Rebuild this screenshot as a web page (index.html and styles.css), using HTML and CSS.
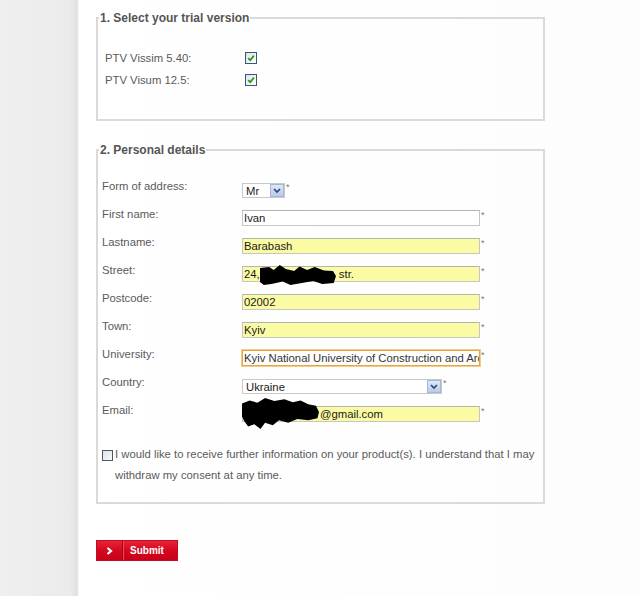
FILE: index.html
```html
<!DOCTYPE html>
<html lang="en">
<head>
<meta charset="utf-8">
<title>Trial version request</title>
<link rel="stylesheet" href="styles.css">
</head>
<body>
<div class="page">
  <aside class="sidebar"></aside>
  <main class="main">
    <form class="form">
      <fieldset class="box box-trial">
        <legend class="box-title">1. Select your trial version</legend>
        <div class="trial-row">
          <span class="trial-label">PTV Vissim 5.40:</span>
          <span class="check"><svg viewBox="0 0 10 10" width="10" height="10"><path d="M2.2 5.2 L4.2 7.2 L7.9 2.6" fill="none" stroke="#1e9a22" stroke-width="1.7"/></svg></span>
        </div>
        <div class="trial-row">
          <span class="trial-label">PTV Visum 12.5:</span>
          <span class="check"><svg viewBox="0 0 10 10" width="10" height="10"><path d="M2.2 5.2 L4.2 7.2 L7.9 2.6" fill="none" stroke="#1e9a22" stroke-width="1.7"/></svg></span>
        </div>
      </fieldset>

      <fieldset class="box box-personal">
        <legend class="box-title">2. Personal details</legend>
        <div class="row">
          <span class="label">Form of address:</span>
          <span class="select select-small">Mr<span class="select-btn"><svg viewBox="0 0 8 6" width="8" height="6"><path d="M1 1 L4 4 L7 1" fill="none" stroke="#2b4577" stroke-width="1.7"/></svg></span></span>
          <span class="req">*</span>
        </div>
        <div class="row">
          <span class="label">First name:</span>
          <span class="input">Ivan</span>
          <span class="req">*</span>
        </div>
        <div class="row">
          <span class="label">Lastname:</span>
          <span class="input filled">Barabash</span>
          <span class="req">*</span>
        </div>
        <div class="row">
          <span class="label">Street:</span>
          <span class="input filled">24,<span class="gap-street"></span> str.<span class="blob blob-street"></span></span>
          <span class="req">*</span>
        </div>
        <div class="row">
          <span class="label">Postcode:</span>
          <span class="input filled">02002</span>
          <span class="req">*</span>
        </div>
        <div class="row">
          <span class="label">Town:</span>
          <span class="input filled">Kyiv</span>
          <span class="req">*</span>
        </div>
        <div class="row">
          <span class="label">University:</span>
          <input class="input focused" type="text" readonly value="Kyiv National University of Construction and Architecture">
          <span class="req">*</span>
        </div>
        <div class="row">
          <span class="label">Country:</span>
          <span class="select select-wide">Ukraine<span class="select-btn"><svg viewBox="0 0 8 6" width="8" height="6"><path d="M1 1 L4 4 L7 1" fill="none" stroke="#2b4577" stroke-width="1.7"/></svg></span></span>
          <span class="req">*</span>
        </div>
        <div class="row">
          <span class="label">Email:</span>
          <span class="input filled"><span class="gap-email"></span>@gmail.com<span class="blob blob-email"></span></span>
          <span class="req">*</span>
        </div>
        <div class="consent">
          <span class="check check-empty"></span>
          <span class="consent-text">I would like to receive further information on your product(s). I understand that I may withdraw my consent at any time.</span>
        </div>
      </fieldset>

      <button type="button" class="submit"><span class="submit-arrow"><svg viewBox="0 0 8 8" width="8" height="8"><path d="M1.5 1 L5 4 L1.5 7" fill="none" stroke="#fff" stroke-width="2.2"/></svg></span><span class="submit-label">Submit</span></button>
    </form>
  </main>
</div>
</body>
</html>
```

FILE: styles.css
```css
* { box-sizing: border-box; }

html, body {
  margin: 0;
  padding: 0;
  background: #ffffff;
}

body {
  font-family: "Liberation Sans", Arial, sans-serif;
  font-size: 11.3px;
  color: #5a5a5a;
}

.page {
  display: flex;
  min-height: 596px;
}

.sidebar {
  width: 80px;
  flex: none;
  background: linear-gradient(to right, #efefef 0, #ebebeb 70px, #e4e4e4 75px, #dedede 77px, #f3f3f3 78px, #ffffff 80px);
}

.main {
  flex: 1;
  padding: 11px 0 0 16px;
  background: linear-gradient(to right, #ffffff 0, #fdfdfd 100%);
}

.form {
  margin: 0;
}

.box {
  width: 449px;
  margin: 0;
  border: 2px solid #dadada;
  padding: 0 0 0 4px;
}

.box-title {
  margin-left: -3px;
  padding: 0 1px;
  font-weight: bold;
  font-size: 12px;
  line-height: 14px;
  color: #555555;
}

.box-trial {
  padding-top: 22px;
  padding-bottom: 28px;
}

.trial-row {
  display: flex;
  align-items: center;
  height: 22px;
  padding-left: 3px;
}

.trial-label {
  width: 140px;
  flex: none;
}

.check {
  width: 12px;
  height: 12px;
  flex: none;
  display: flex;
  align-items: center;
  justify-content: center;
  border: 1px solid #3d5670;
  background: linear-gradient(to bottom right, #dce3ea, #ffffff);
}

.box-personal {
  margin-top: 22px;
  padding-top: 21px;
  padding-bottom: 16px;
}

.row {
  display: flex;
  align-items: flex-start;
  height: 28px;
}

.label {
  width: 140px;
  flex: none;
  line-height: 16px;
}

.input {
  position: relative;
  display: block;
  width: 238px;
  height: 16px;
  margin: 4px 0 0 0;
  padding: 0 0 0 1px;
  border: 1px solid #c6c6c6;
  border-top-color: #b4b4b4;
  border-radius: 0;
  background: #ffffff;
  color: #1a1a1a;
  font-family: "Liberation Sans", Arial, sans-serif;
  font-size: 11.3px;
  line-height: 14px;
  white-space: nowrap;
  outline: none;
}

.input.filled {
  background: #fbfba4;
}

.input.focused {
  border: 1px solid #e8a53e;
  box-shadow: 0 0 0 1px #f3cc8c;
  padding-left: 1px;
  color: #333333;
}

.req {
  margin-left: 1px;
  margin-top: 5px;
  font-size: 9px;
  line-height: 9px;
  color: #777777;
}

.select {
  position: relative;
  display: flex;
  align-items: center;
  height: 15px;
  margin-top: 5px;
  padding-left: 3px;
  border: 1px solid #c9c9c9;
  background: #ffffff;
  color: #1a1a1a;
  font-size: 11.3px;
}

.select-small {
  width: 43px;
}

.select-wide {
  width: 200px;
}

.select-btn {
  position: absolute;
  right: 0;
  top: 0;
  bottom: 0;
  width: 14px;
  display: flex;
  align-items: center;
  justify-content: center;
  background: linear-gradient(to bottom, #dfe8f7, #b9cbea);
  border: 1px solid #a3b7da;
}

.gap-street {
  display: inline-block;
  width: 76px;
}

.gap-email {
  display: inline-block;
  width: 76px;
}

.blob {
  position: absolute;
  background: #000000;
}

.blob-street {
  left: 17px;
  top: -2px;
  width: 76px;
  height: 20px;
  clip-path: polygon(0 15%, 12% 10%, 18% 25%, 26% 0, 34% 20%, 45% 30%, 52% 8%, 62% 25%, 72% 10%, 84% 28%, 96% 30%, 100% 55%, 97% 90%, 82% 95%, 70% 80%, 55% 90%, 40% 100%, 30% 82%, 15% 95%, 5% 100%, 0 85%);
}

.blob-email {
  left: -1px;
  top: -9px;
  width: 77px;
  height: 31px;
  clip-path: polygon(0 18%, 10% 8%, 20% 15%, 30% 0, 42% 10%, 55% 4%, 66% 14%, 76% 8%, 86% 20%, 96% 25%, 100% 45%, 98% 65%, 86% 72%, 72% 68%, 60% 80%, 48% 72%, 40% 88%, 30% 80%, 24% 100%, 16% 85%, 8% 92%, 3% 75%, 0 60%);
}

.consent {
  display: flex;
  align-items: flex-start;
  margin-top: 14px;
}

.check-empty {
  width: 11px;
  height: 11px;
  margin-top: 6px;
  margin-right: 2px;
  border: 1px solid #4a5a6a;
  background: linear-gradient(to bottom right, #dde2e8, #fafafa);
}

.consent-text {
  flex: 1;
  line-height: 21px;
  color: #5a5a5a;
}

.submit {
  display: flex;
  align-items: stretch;
  width: 82px;
  height: 21px;
  margin: 36px 0 0 0;
  padding: 0;
  border: 1px solid #c20d1e;
  background: linear-gradient(to bottom, #e8233a 0, #d4081f 50%, #c8001a 100%);
  font-family: "Liberation Sans", Arial, sans-serif;
  cursor: pointer;
}

.submit-arrow {
  width: 26px;
  flex: none;
  display: flex;
  align-items: center;
  justify-content: center;
  border-right: 1px solid #a8000f;
  box-shadow: 1px 0 0 #e04a5a;
}

.submit-label {
  flex: 1;
  display: flex;
  align-items: center;
  padding-left: 7px;
  color: #ffffff;
  font-weight: bold;
  font-size: 10px;
}
```
